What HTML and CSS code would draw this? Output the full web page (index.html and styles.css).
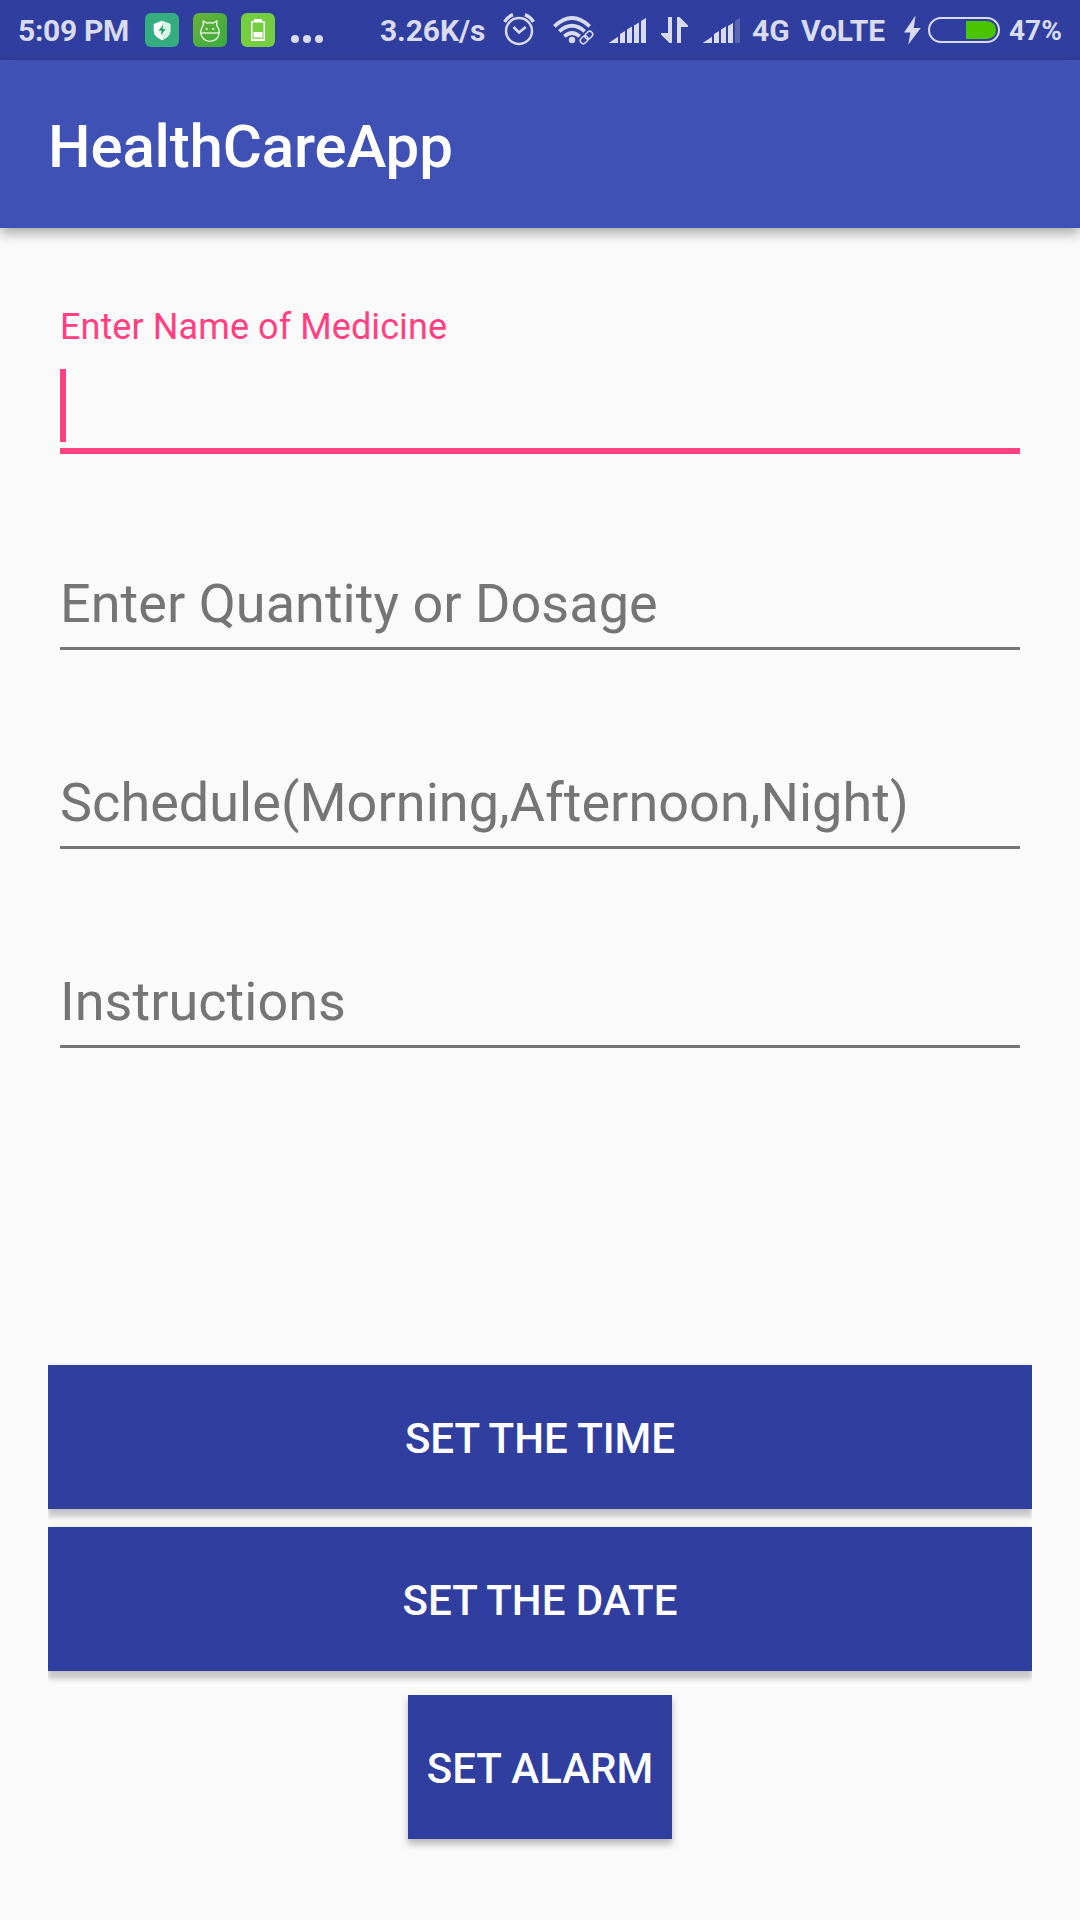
FILE: index.html
```html
<!DOCTYPE html>
<html lang="en">
<head>
<meta charset="utf-8">
<title>HealthCareApp</title>
<link rel="stylesheet" href="styles.css">
</head>
<body>
<header class="status-bar">
  <span class="clock">5:09 PM</span>
  <svg class="notice-icons" width="190" height="60" viewBox="140 0 190 60">
    <defs>
      <linearGradient id="leaf" x1="0" y1="0" x2="1" y2="1">
        <stop offset="0" stop-color="#6bb13a"/><stop offset="1" stop-color="#36ab3d"/>
      </linearGradient>
    </defs>
    <rect x="145" y="13" width="34" height="34" rx="6" fill="#35ad80"/>
    <path d="M162 20.700l8.300 3.300v7q0 5.500-8.300 9.300q-8.300-3.800-8.300-9.300v-7z" fill="#fff"/>
    <path d="M162 20.700l8.300 3.300v7q0 5.500-8.300 9.300z" fill="#d5f5e8"/>
    <path d="M163.200 24.500l-4.700 6.300h3l-.7 4.700 4.800-6.500h-3z" fill="#249d6e"/>
    <rect x="193" y="13" width="34" height="34" rx="6" fill="url(#leaf)"/>
    <g fill="none" stroke="#fff" stroke-width="1.200">
      <path d="M203.200 25.500v-4.500l3.800 2.200q3-1 6 0l3.800-2.200v4.500q2.400 3 2.400 6.700a9.200 9.200 0 0 1-18.400 0q0-3.700 2.400-6.700z"/>
      <path d="M200.500 33h19"/>
    </g>
    <g fill="#fff"><circle cx="206.700" cy="29" r="1"/><circle cx="213.300" cy="29" r="1"/></g>
    <rect x="241" y="13" width="34" height="34" rx="6" fill="#75ce40"/>
    <g fill="#fff">
      <rect x="254" y="19" width="8" height="2"/>
      <path fill-rule="evenodd" d="M252 21h12q1 0 1 1v18q0 1-1 1h-12q-1 0-1-1v-18q0-1 1-1zM252.500 22.500v16.200h11v-16.200z"/>
      <rect x="253.500" y="32" width="9" height="5.500"/>
    </g>
    <g fill="#d9dbee"><circle cx="295" cy="39" r="4"/><circle cx="307" cy="39" r="4"/><circle cx="319" cy="39" r="4"/></g>
  </svg>
  <span class="speed">3.26K/s</span>
  <svg class="signal-icons" width="250" height="60" viewBox="495 0 250 60">
    <g fill="none" stroke="#d9dbee">
      <circle cx="519" cy="31" r="13" stroke-width="2.400"/>
      <path d="M513.500 27l5.500 5.500 6.700-5.500" stroke-width="2.600"/>
      <path d="M504.500 21.800q3-5 8.500-7.200M533.500 21.800q-3-5-8.500-7.200" stroke-width="3.400"/>
      <g stroke-width="3.800">
        <path d="M554.300 26.300q17.700-16.600 35.400 0"/>
        <path d="M559.300 31.300q12.700-11.300 25.400 0"/>
        <path d="M564.300 36.300q7.700-6.600 15.400 0"/>
      </g>
      <g stroke-width="1.500" transform="rotate(-45 586.500 37.500)">
        <rect x="579" y="34.500" width="8.500" height="6" rx="3"/>
        <rect x="585.500" y="34.500" width="8.500" height="6" rx="3"/>
      </g>
    </g>
    <g fill="#d9dbee">
      <circle cx="572" cy="40" r="3.200"/>
      <path d="M609 42.800l9-6v6.200h-9zM620 34l5-3v12h-5zM627 29.500l5-3v16.500h-5zM634 25.500l5-3v20.500h-5zM641 21l5-3v25h-5z"/>
      <path d="M672 17v26h-2.500l-8.500-8.500v-1.500h7v-16zM677 43v-26h2.500l8.500 8.500v1.500h-7v16z"/>
      <path d="M703 42.800l9-6v6.200h-9zM714 34l5-3v12h-5zM721 29.500l5-3v16.500h-5zM728 26l5-3v20h-5z"/>
      <path opacity=".25" d="M735 21l5-3v25h-5z"/>
    </g>
  </svg>
  <span class="network">4G</span>
  <span class="volte">VoLTE</span>
  <svg class="battery" width="104" height="60" viewBox="900 0 104 60">
    <path d="M915.500 15.500l-11.500 17h6.300l-2 12 12.500-16.500h-7z" fill="#d9dbee"/>
    <rect x="929" y="18" width="70" height="24" rx="12" fill="none" stroke="#d9dbee" stroke-width="2"/>
    <path d="M966 21h21q9 1 9 9t-9 9h-21z" fill="#4bc400"/>
  </svg>
  <span class="percent">47%</span>
</header>
<div class="app-bar"><h1 class="title">HealthCareApp</h1></div>
<main class="content">
  <div class="field focused">
    <label class="floating-label">Enter Name of Medicine</label>
    <div class="cursor"></div>
  </div>
  <div class="field">Enter Quantity or Dosage</div>
  <div class="field">Schedule(Morning,Afternoon,Night)</div>
  <div class="field">Instructions</div>
  <div class="actions">
    <button class="button">SET THE TIME</button>
    <button class="button">SET THE DATE</button>
    <button class="button compact">SET ALARM</button>
  </div>
</main>
</body>
</html>
```
FILE: styles.css
```css
* { box-sizing: border-box; }
body {
  margin: 0;
  width: 1080px;
  height: 1920px;
  display: flex;
  flex-direction: column;
  background: #fafafa;
  font-family: Roboto, sans-serif;
  overflow: hidden;
}
.status-bar {
  display: flex;
  flex: none;
  height: 60px;
  background: #303f9f;
  color: #d9dbee;
  font-size: 30px;
  font-weight: 700;
  line-height: 62px;
  white-space: nowrap;
}
.status-bar svg { flex: none; }
.clock { flex: none; width: 122px; margin-left: 18px; letter-spacing: -.3px; }
.speed { flex: none; width: 115px; margin-left: 50px; letter-spacing: -.1px; }
.network { flex: none; width: 49px; margin-left: 7px; }
.volte { flex: none; width: 99px; }
.percent { flex: none; margin-left: 5px; font-size: 28px; }
.app-bar {
  flex: none;
  height: 168px;
  padding-left: 48px;
  background: #3f51b5;
  box-shadow: 0 5px 12px rgba(0, 0, 0, .34);
}
.title {
  margin: 0;
  color: #fff;
  font-size: 60px;
  font-weight: 500;
  line-height: 174px;
  letter-spacing: -.15px;
}
.content { display: flex; flex-direction: column; padding: 0 48px; }
.field {
  height: 199px;
  margin: 0 12px;
  padding-top: 121px;
  border-bottom: 3px solid #757575;
  color: #757575;
  font-size: 54px;
  line-height: 64px;
  letter-spacing: .03px;
  white-space: nowrap;
}
.field.focused {
  height: 226px;
  padding-top: 78px;
  border-bottom: 6px solid #ff4081;
  margin-bottom: -3px;
}
.floating-label {
  display: block;
  height: 63px;
  color: #ff4081;
  font-size: 36px;
  line-height: 42px;
  letter-spacing: .08px;
}
.cursor { width: 6px; height: 73px; background: #ff4081; }
.actions { display: flex; flex-direction: column; padding-top: 317px; }
.button {
  height: 144px;
  margin: 0 0 18px;
  padding: 3px 0 0;
  border: 0;
  background: #303f9f;
  color: #fff;
  font: 500 42px/141px Roboto, sans-serif;
  box-shadow: 0 8px 5px rgba(0, 0, 0, .2), 0 0 3px rgba(0, 0, 0, .12);
  clip-path: inset(-3px 0 -16px);
}
.button.compact {
  width: 264px;
  margin: 6px auto 0;
  box-shadow: 0 5px 7px rgba(0, 0, 0, .28);
  clip-path: none;
}
```
